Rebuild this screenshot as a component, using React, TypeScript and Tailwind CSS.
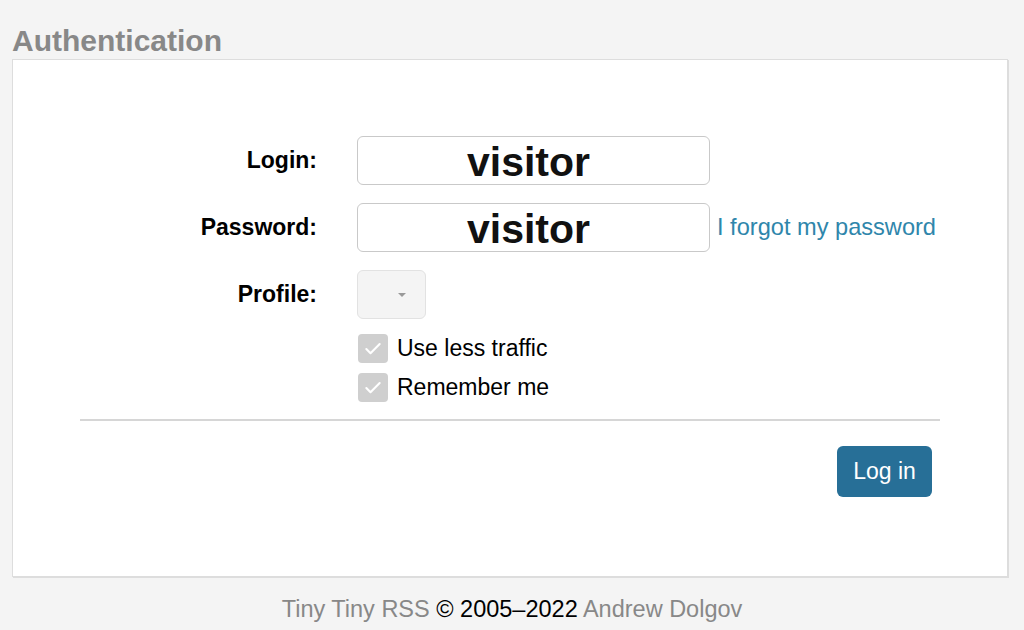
import { Check } from 'lucide-react';

function Field({ label, children }: { label: string; children: React.ReactNode }) {
  return (
    <>
      <label className="text-right text-[23px] font-bold text-black">{label}</label>
      <div className="flex items-center gap-[7px]">{children}</div>
    </>
  );
}

function TextBox({ value }: { value: string }) {
  return (
    <div className="flex h-[49px] w-[353px] items-center justify-center rounded-[6px] border border-[#c9c9c9] bg-white pr-[10px] pt-[4px] text-[41px] font-semibold leading-none text-[#111]">
      {value}
    </div>
  );
}

function CheckRow({ label }: { label: string }) {
  return (
    <div className="flex h-[29px] items-center gap-[9px]">
      <span className="flex h-[29px] w-[30px] items-center justify-center rounded-[4px] bg-[#cfcfcf]">
        <Check className="h-[20px] w-[20px] text-white" strokeWidth={2.5} />
      </span>
      <span className="text-[23px] text-black">{label}</span>
    </div>
  );
}

export default function App() {
  return (
    <div className="min-h-screen bg-[#f4f4f4] pl-[12px] font-['Liberation_Sans',Arial,sans-serif]">
      <h1 className="pt-[26px] text-[30px] font-bold leading-none text-[#888]">Authentication</h1>

      <div className="mt-[3px] h-[518px] w-[996px] border border-[#ddd] bg-white shadow-[1px_1px_0_#ddd]">
        <div className="mx-[67px] pt-[76px]">
          <div className="grid grid-cols-[237px_1fr] items-center gap-x-[40px] gap-y-[18px]">
            <Field label="Login:">
              <TextBox value="visitor" />
            </Field>
            <Field label="Password:">
              <TextBox value="visitor" />
              <a className="text-[23.6px] text-[#2f86ab]">I forgot my password</a>
            </Field>
            <Field label="Profile:">
              <div className="flex h-[49px] w-[69px] items-center justify-center rounded-[6px] border border-[#e2e2e2] bg-[#f4f4f4]">
                <span className="ml-[20px] h-0 w-0 border-x-[4px] border-t-[4px] border-x-transparent border-t-[#999]" />
              </div>
            </Field>
          </div>

          <div className="ml-[278px] mt-[15px] flex flex-col gap-[10px]">
            <CheckRow label="Use less traffic" />
            <CheckRow label="Remember me" />
          </div>

          <div className="mt-[17px] h-[2px] bg-[#d6d6d6]" />

          <div className="mt-[25px] flex justify-end pr-[8px]">
            <button className="h-[51px] w-[95px] rounded-[6px] bg-[#276f97] text-[23px] text-white">Log in</button>
          </div>
        </div>
      </div>

      <p className="mt-[15px] pr-[12px] text-center text-[23.5px] text-black">
        <span className="text-[#888]">Tiny Tiny RSS</span> © 2005–2022 <span className="text-[#888]">Andrew Dolgov</span>
      </p>
    </div>
  );
}
